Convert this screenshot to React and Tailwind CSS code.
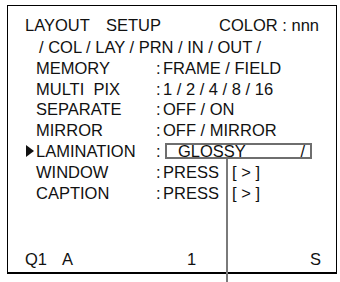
import React from "react";

function Row({ mark, label, children }) {
  return (
    <div className="flex h-[20.8px] items-start leading-[20.8px]">
      <div className="flex h-full w-[28px] items-start pl-[18px]">
        {mark && (
          <svg width="8" height="12" viewBox="0 0 8 12" className="mt-[4px]">
            <polygon points="0,0 8,6 0,12" fill="#111" />
          </svg>
        )}
      </div>
      <div className="w-[120px] whitespace-pre">{label}</div>
      <div className="w-[7px]">:</div>
      <div className="flex-1 whitespace-pre">{children}</div>
    </div>
  );
}

export default function App() {
  return (
    <div
      className="relative h-[282px] w-[340px] bg-white text-[16.5px] text-[#111]"
      style={{ fontFamily: '"Liberation Sans", Arial, sans-serif' }}
    >
      <div className="absolute left-[7px] top-[5px] flex h-[269px] w-[330px] flex-col border border-b-2 border-black pt-[9px]">
        <div className="flex h-[22px] leading-[20.8px]">
          <span className="ml-[17px] w-[81px]">LAYOUT</span>
          <span>SETUP</span>
          <span className="ml-auto mr-[17px]">COLOR : nnn</span>
        </div>
        <div className="h-[20.8px] whitespace-pre pl-[31px] leading-[20.8px]">
          / COL / LAY / PRN / IN / OUT /
        </div>
        <Row label="MEMORY">FRAME / FIELD</Row>
        <Row label="MULTI  PIX">1 / 2 / 4 / 8 / 16</Row>
        <Row label="SEPARATE">OFF / ON</Row>
        <Row label="MIRROR">OFF / MIRROR</Row>
        <Row mark label="LAMINATION">
          <div className="ml-[2px] mt-[2px] flex h-[16px] w-[147px] border-2 border-[#6e6e6e] leading-[12px]">
            <span className="pl-[11px]">GLOSSY</span>
            <span className="ml-auto pr-[5px]">/</span>
          </div>
        </Row>
        <Row label="WINDOW">
          <span className="inline-block w-[69px]">PRESS</span>
          <span>[ &gt; ]</span>
        </Row>
        <Row label="CAPTION">
          <span className="inline-block w-[69px]">PRESS</span>
          <span>[ &gt; ]</span>
        </Row>
        <div className="mt-[46px] flex h-[20.8px] leading-[20.8px]">
          <span className="ml-[17px] w-[37px]">Q1</span>
          <span className="w-[125px]">A</span>
          <span className="w-[123px]">1</span>
          <span>S</span>
        </div>
      </div>
      <div className="absolute left-[226px] top-[159px] h-[123px] w-[2px] bg-[#7a7a7a]" />
    </div>
  );
}
